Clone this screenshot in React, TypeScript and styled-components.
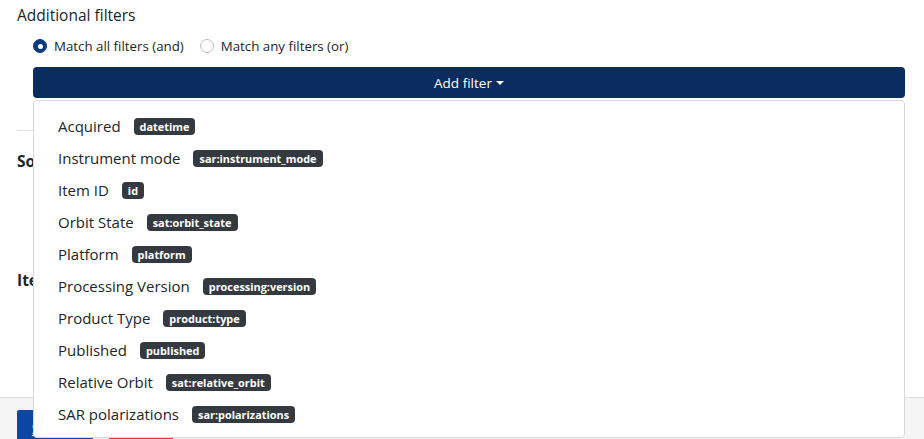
import React from "react";
import styled, { createGlobalStyle } from "styled-components";

const GlobalStyle = createGlobalStyle`
  html, body { margin: 0; padding: 0; background: #ffffff; }
  body {
    font-family: "Open Sans", "Noto Sans", "Liberation Sans", sans-serif;
    color: #212529;
    -webkit-font-smoothing: antialiased;
  }
  * { box-sizing: border-box; }
`;

const Page = styled.div`
  width: 924px;
  height: 439px;
  overflow: hidden;
  display: flex;
  flex-direction: column;
`;

const Main = styled.div`
  padding: 3px 19px 0 17px;
  display: flex;
  flex-direction: column;
`;

const Title = styled.div`
  font-size: 15.5px;
  line-height: 24px;
`;

const Section = styled.div`
  padding-left: 16px;
  display: flex;
  flex-direction: column;
`;

const RadioRow = styled.div`
  margin-top: 9px;
  display: flex;
  align-items: center;
  gap: 16px;
  height: 20px;
`;

const RadioLabel = styled.label`
  display: flex;
  align-items: center;
  gap: 7px;
  font-size: 13.3px;
  line-height: 20px;
`;

const RadioDot = styled.span<{ $checked?: boolean }>`
  width: 14px;
  height: 14px;
  border-radius: 50%;
  flex: none;
  background: ${(p) => (p.$checked ? "#0b3a80" : "#ffffff")};
  border: 1px solid ${(p) => (p.$checked ? "#0b3a80" : "#b9bec4")};
  display: flex;
  align-items: center;
  justify-content: center;
  &::after {
    content: "";
    width: 5px;
    height: 5px;
    border-radius: 50%;
    background: #ffffff;
    display: ${(p) => (p.$checked ? "block" : "none")};
  }
`;

const DropWrap = styled.div`
  position: relative;
  margin-top: 11px;
`;

const AddButton = styled.button`
  width: 100%;
  height: 31px;
  border: none;
  border-radius: 4px;
  background: #0b2c5f;
  color: #ffffff;
  font-family: inherit;
  font-size: 13.5px;
  display: flex;
  align-items: center;
  justify-content: center;
  gap: 4px;
  cursor: pointer;
`;

const Caret = styled.span`
  width: 0;
  height: 0;
  border-left: 4px solid transparent;
  border-right: 4px solid transparent;
  border-top: 4px solid #ffffff;
  margin-top: 1px;
`;

const Menu = styled.ul`
  position: absolute;
  left: 0;
  right: 0;
  top: calc(100% + 2px);
  margin: 0;
  padding: 9px 0 7px;
  list-style: none;
  background: #ffffff;
  border: 1px solid #d6d8db;
  border-radius: 4px;
  z-index: 10;
`;

const MenuItem = styled.li`
  height: 32px;
  padding: 0 24px;
  display: flex;
  align-items: center;
  font-size: 15px;
  color: #212529;
`;

const Badge = styled.span`
  margin-left: 13px;
  background: #343a40;
  color: #ffffff;
  font-size: 10.9px;
  font-weight: 700;
  line-height: 13px;
  padding: 2px 6px;
  border-radius: 4px;
`;

const Rule = styled.hr`
  margin: 32px 0 0;
  border: none;
  border-top: 1px solid #dee2e6;
`;

const FieldLabel = styled.div<{ $gap: number }>`
  margin-top: ${(p) => p.$gap}px;
  font-size: 15.5px;
  font-weight: 700;
  line-height: 24px;
`;

const Input = styled.div<{ $gap: number }>`
  margin: ${(p) => p.$gap}px 0 0 16px;
  height: 40px;
  border: 1px solid #a9aeb3;
  border-radius: 4px;
`;

const Footer = styled.div`
  margin-top: 57px;
  flex: 1;
  background: #f5f5f5;
  border-top: 1px solid #dcdcdc;
  padding: 12px 17px 0;
  display: flex;
  gap: 16px;
`;

const FooterButton = styled.button<{ $tone: "primary" | "danger"; $w: number }>`
  width: ${(p) => p.$w}px;
  height: 36px;
  border: none;
  border-radius: 2px;
  background: ${(p) => (p.$tone === "primary" ? "#0d47a1" : "#e53935")};
  color: #ffffff;
  font-family: inherit;
  font-size: 14px;
  text-decoration: underline;
`;

const filters: [string, string][] = [
  ["Acquired", "datetime"],
  ["Instrument mode", "sar:instrument_mode"],
  ["Item ID", "id"],
  ["Orbit State", "sat:orbit_state"],
  ["Platform", "platform"],
  ["Processing Version", "processing:version"],
  ["Product Type", "product:type"],
  ["Published", "published"],
  ["Relative Orbit", "sat:relative_orbit"],
  ["SAR polarizations", "sar:polarizations"],
];

export default function App() {
  return (
    <Page>
      <GlobalStyle />
      <Main>
        <Title>Additional filters</Title>
        <Section>
          <RadioRow>
            <RadioLabel>
              <RadioDot $checked />
              Match all filters (and)
            </RadioLabel>
            <RadioLabel>
              <RadioDot />
              Match any filters (or)
            </RadioLabel>
          </RadioRow>
          <DropWrap>
            <AddButton>
              Add filter <Caret />
            </AddButton>
            <Menu>
              {filters.map(([label, key]) => (
                <MenuItem key={key}>
                  {label}
                  <Badge>{key}</Badge>
                </MenuItem>
              ))}
            </Menu>
          </DropWrap>
        </Section>
        <Rule />
        <FieldLabel $gap={18}>Sort by</FieldLabel>
        <Input $gap={9} />
        <FieldLabel $gap={46}>Items per page</FieldLabel>
        <Input $gap={8} />
      </Main>
      <Footer>
        <FooterButton $tone="primary" $w={76}>Submit</FooterButton>
        <FooterButton $tone="danger" $w={64}>Reset</FooterButton>
      </Footer>
    </Page>
  );
}
